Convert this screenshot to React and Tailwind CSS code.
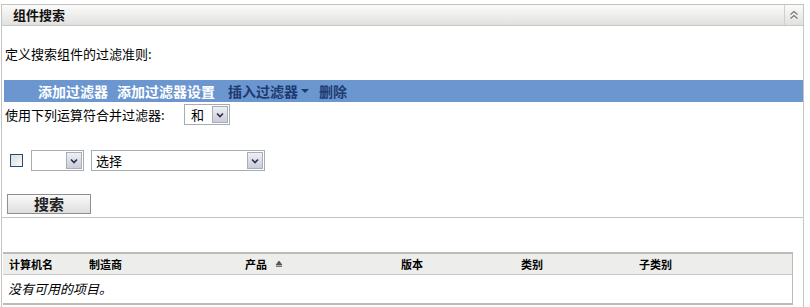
import React from 'react';

const font = { fontFamily: '"Noto Sans CJK SC", "Liberation Sans", sans-serif' };

const Arrow = () => (
  <span className="flex h-[17px] w-[16px] items-center justify-center border border-[#a8adb8] bg-gradient-to-b from-[#eef0f6] to-[#c9ccda]">
    <svg width="8" height="6" viewBox="0 0 8 6">
      <path d="M1 1.5 L4 4.5 L7 1.5" fill="none" stroke="#2a2f45" strokeWidth="1.6" />
    </svg>
  </span>
);

const Select = ({ value, className }) => (
  <div className={`flex h-[21px] items-center justify-between border border-[#a5acb2] bg-white pl-[4px] pr-[1px] text-[13px] text-black ${className}`}>
    <span className="leading-none">{value}</span>
    <Arrow />
  </div>
);

const columns = [
  { label: '计算机名', w: 'w-[80px]' },
  { label: '制造商', w: 'w-[156px]' },
  { label: '产品', w: 'w-[156px]', sort: true },
  { label: '版本', w: 'w-[120px]' },
  { label: '类别', w: 'w-[118px]' },
  { label: '子类别', w: 'w-[120px]' },
];

export default function App() {
  return (
    <div className="h-[307px] w-[810px] overflow-hidden bg-white pt-[4px]" style={font}>
      <div className="ml-[1px] h-[303px] w-[803px] border-x border-[#c4c4c0]">
        {/* Panel */}
        <div className="border-y border-[#c4c4c0]">
          <div className="flex h-[21px] items-center justify-between bg-gradient-to-b from-[#fbfbfa] to-[#e1e2df] border-b border-[#c8c8c4]">
            <span className="pl-[11px] text-[13px] font-bold text-[#111]">组件搜索</span>
            <span className="flex h-full w-[19px] items-center justify-center border-l border-[#d0d0cc]">
              <svg width="10" height="10" viewBox="0 0 10 10">
                <path d="M1.5 4.5 L5 1.5 L8.5 4.5 M1.5 8.5 L5 5.5 L8.5 8.5" fill="none" stroke="#777" strokeWidth="1.2" />
              </svg>
            </span>
          </div>

          <div className="pt-[19px] pl-[3px] text-[13px] leading-[18px] text-black">定义搜索组件的过滤准则:</div>

          {/* toolbar */}
          <div className="mt-[17px] ml-[2px] flex h-[22px] items-center bg-[#6b96cf] pl-[34px] text-[14px] font-bold">
            <span className="text-white">添加过滤器</span>
            <span className="ml-[9px] text-white">添加过滤器设置</span>
            <span className="ml-[13px] flex items-center text-[#1d3b70]">
              插入过滤器
              <svg className="ml-[3px]" width="8" height="5" viewBox="0 0 8 5">
                <path d="M0 0 L8 0 L4 4 Z" fill="#1d3b70" />
              </svg>
            </span>
            <span className="ml-[10px] text-[#1d3b70]">删除</span>
          </div>

          <div className="mt-[2px] flex items-center pl-[3px] text-[13px] text-black">
            <span className="w-[179px]">使用下列运算符合并过滤器:</span>
            <Select value="和" className="w-[46px] pl-[6px]" />
          </div>

          <div className="mt-[25px] flex items-center pl-[8px]">
            <span className="h-[13px] w-[13px] border border-[#1c4f7d] bg-gradient-to-br from-[#dcdcd8] to-[#fafafa]" />
            <Select value="" className="ml-[8px] w-[53px]" />
            <Select value="选择" className="ml-[7px] w-[174px]" />
          </div>

          <div className="mt-[20px] mb-[2px] pl-[5px]">
            <button className="h-[20px] w-[84px] border border-[#8f8f8f] bg-gradient-to-b from-[#fafafa] to-[#dedede] text-[15px] font-bold leading-none text-[#222]">
              搜索
            </button>
          </div>
        </div>

        {/* Table */}
        <div className="mt-[34px] ml-[1px] w-[790px] border-t-2 border-b-2 border-r border-[#bcbcb6]">
          <div className="flex h-[21px] items-center border-b border-[#c8c8c4] bg-[#ededeb] pl-[6px] text-[11px] font-bold text-black">
            {columns.map((c) => (
              <span key={c.label} className={`flex items-center ${c.w}`}>
                {c.label}
                {c.sort && (
                  <svg className="ml-[8px]" width="8" height="8" viewBox="0 0 8 8">
                    <path d="M4 1 L7 5 L1 5 Z M1 6.5 L7 6.5" fill="#555" stroke="#555" strokeWidth="0.8" />
                  </svg>
                )}
              </span>
            ))}
          </div>
          <div className="flex h-[28px] items-center pl-[5px] text-[13px] italic text-black">没有可用的项目。</div>
        </div>
      </div>
    </div>
  );
}
